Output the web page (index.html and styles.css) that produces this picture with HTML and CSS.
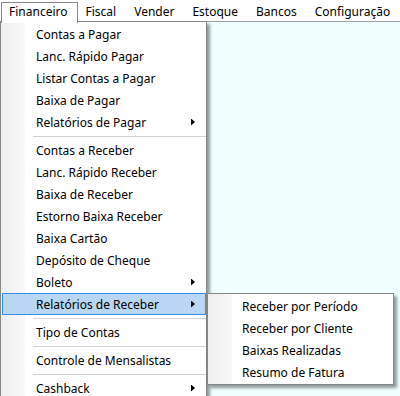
FILE: index.html
```html
<!DOCTYPE html>
<html lang="pt-BR">
<head>
<meta charset="utf-8">
<title>Financeiro</title>
<link rel="stylesheet" href="styles.css">
</head>
<body>
<div class="app">
  <nav class="menubar">
    <div class="top-item open">Financeiro</div>
    <div class="top-item">Fiscal</div>
    <div class="top-item">Vender</div>
    <div class="top-item">Estoque</div>
    <div class="top-item">Bancos</div>
    <div class="top-item">Configuração</div>
  </nav>
  <main class="client"></main>

  <div class="dropdown main-menu">
    <div class="item">Contas a Pagar</div>
    <div class="item">Lanc. Rápido Pagar</div>
    <div class="item">Listar Contas a Pagar</div>
    <div class="item">Baixa de Pagar</div>
    <div class="item has-sub">Relatórios de Pagar<span class="arrow"></span></div>
    <div class="sep"></div>
    <div class="item">Contas a Receber</div>
    <div class="item">Lanc. Rápido Receber</div>
    <div class="item">Baixa de Receber</div>
    <div class="item">Estorno Baixa Receber</div>
    <div class="item">Baixa Cartão</div>
    <div class="item">Depósito de Cheque</div>
    <div class="item has-sub">Boleto<span class="arrow"></span></div>
    <div class="item has-sub active">Relatórios de Receber<span class="arrow"></span></div>
    <div class="sep"></div>
    <div class="item">Tipo de Contas</div>
    <div class="sep"></div>
    <div class="item">Controle de Mensalistas</div>
    <div class="sep"></div>
    <div class="item has-sub">Cashback<span class="arrow"></span></div>
  </div>

  <div class="dropdown sub-menu">
    <div class="item">Receber por Período</div>
    <div class="item">Receber por Cliente</div>
    <div class="item">Baixas Realizadas</div>
    <div class="item">Resumo de Fatura</div>
  </div>
</div>
</body>
</html>
```
FILE: styles.css
```css
html, body {
  margin: 0;
  padding: 0;
  height: 100%;
  overflow: hidden;
}

body {
  font-family: "Noto Sans", "Liberation Sans", sans-serif;
  font-size: 12px;
  color: #000;
  background: #f0ffff;
}

.app {
  position: relative;
  display: flex;
  flex-direction: column;
  height: 100vh;
}

.menubar {
  display: flex;
  height: 21px;
  padding-left: 1px;
  background: #ffffff;
  flex: none;
}

.top-item {
  box-sizing: border-box;
  height: 20px;
  margin-top: 2px;
  padding: 0 9px 0 7px;
  border: 1px solid transparent;
  border-bottom: none;
  line-height: 18px;
  white-space: nowrap;
}

.top-item.open {
  position: relative;
  z-index: 5;
  height: 21px;
  border-color: #868686;
  background: #fff;
}

.client {
  flex: 1;
  border-top: 1px solid #a0a0a0;
  background: #f0ffff;
}

.dropdown {
  position: absolute;
  box-sizing: border-box;
  border: 1px solid #868686;
  padding: 1px 0 1px 1px;
  background: linear-gradient(to right, #efefef 0, #f8f8f8 24px, #ffffff 24px);
  box-shadow: 3px 3px 3px rgba(0, 0, 0, 0.4);
  z-index: 4;
}

.main-menu {
  left: 0;
  top: 21px;
  width: 207px;
}

.sub-menu {
  left: 207px;
  top: 293px;
  width: 187px;
  z-index: 6;
  padding-right: 1px;
}

.item {
  display: flex;
  align-items: center;
  box-sizing: border-box;
  height: 22px;
  padding-left: 33px;
  border: 1px solid transparent;
  white-space: nowrap;
}

.sub-menu .item {
  padding-left: 32px;
}

.item.active {
  background: #b9d7f3;
  border-color: #3a8ee2;
}

.arrow {
  width: 4px;
  height: 7px;
  margin-left: auto;
  margin-right: 10px;
  background: #000;
  clip-path: polygon(0 0, 100% 50%, 0 100%);
}

.sep {
  height: 6px;
  box-sizing: border-box;
  padding-top: 3px;
  margin-left: 31px;
}

.sep::before {
  content: "";
  display: block;
  height: 1px;
  background: #d3d3d3;
}
```
